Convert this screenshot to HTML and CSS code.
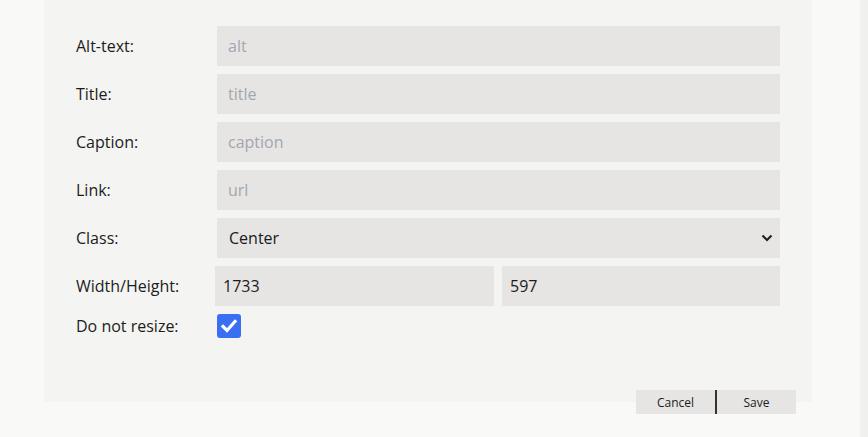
FILE: index.html
```html
<!DOCTYPE html>
<html>
<head>
<meta charset="utf-8">
<link rel="stylesheet" href="styles.css">
</head>
<body>
<div class="page">
  <div class="panel">
    <form class="form">
      <label class="lbl">Alt-text:</label>
      <input class="field" type="text" placeholder="alt">
      <label class="lbl">Title:</label>
      <input class="field" type="text" placeholder="title">
      <label class="lbl">Caption:</label>
      <input class="field" type="text" placeholder="caption">
      <label class="lbl">Link:</label>
      <input class="field" type="text" placeholder="url">
      <label class="lbl">Class:</label>
      <div class="select">
        <span>Center</span>
        <svg class="chev" width="12" height="8" viewBox="0 0 12 8"><path d="M1.5 1.5 L6 6 L10.5 1.5" fill="none" stroke="#222" stroke-width="2.2"/></svg>
      </div>
      <label class="lbl">Width/Height:</label>
      <div class="pair">
        <input class="field" type="text" value="1733">
        <input class="field" type="text" value="597">
      </div>
      <label class="lbl">Do not resize:</label>
      <div class="checkcell">
        <span class="check">
          <svg width="24" height="24" viewBox="0 0 24 24"><path d="M6 12.5 L10 16.5 L18 7.5" fill="none" stroke="#fff" stroke-width="3.2" stroke-linecap="square"/></svg>
        </span>
      </div>
    </form>
  </div>
  <div class="footer">
    <button class="btn" type="button">Cancel</button><span class="sep"></span><button class="btn" type="button">Save</button>
  </div>
</div>
</body>
</html>
```
FILE: styles.css
```css
html, body {
  margin: 0;
  padding: 0;
}
body {
  background: #f9f9f7;
  font-family: "Open Sans", "Noto Sans", sans-serif;
  color: #1a1a1a;
  height: 437px;
  overflow: hidden;
  border-right: 8px solid #f0f0ee;
  box-sizing: border-box;
}
.page {
  width: 768px;
  margin-left: 44px;
}
.panel {
  background: #f4f4f2;
  height: 402px;
  box-sizing: border-box;
  padding: 26px 32px 0 32px;
}
.form {
  display: grid;
  grid-template-columns: 141px 563px;
  grid-template-rows: repeat(6, 40px) 24px;
  row-gap: 8px;
  align-items: center;
}
.lbl {
  font-size: 16px;
  color: #1c1c1c;
}
.field {
  box-sizing: border-box;
  height: 40px;
  width: 100%;
  border: none;
  outline: none;
  background: #e6e5e3;
  font-family: "Open Sans", "Noto Sans", sans-serif;
  font-size: 16px;
  color: #1c1c1c;
  padding: 0 11px;
  margin: 0;
}
.field::placeholder {
  color: #a3a6b0;
}
.select {
  height: 40px;
  background: #e6e5e3;
  display: flex;
  align-items: center;
  justify-content: space-between;
  padding: 0 7px 0 12px;
  font-size: 16px;
}
.chev {
  display: block;
}
.pair {
  display: grid;
  grid-template-columns: 279px 278px;
  column-gap: 8px;
  margin-left: -2px;
}
.pair .field {
  padding: 0 8px;
}
.checkcell {
  display: flex;
  align-items: center;
  height: 24px;
}
.check {
  width: 24px;
  height: 24px;
  border-radius: 3px;
  background: #3a6ff4;
  display: block;
}
.check svg {
  display: block;
}
.footer {
  display: flex;
  justify-content: flex-end;
  margin-top: -12px;
  padding-right: 16px;
}
.btn {
  width: 79px;
  height: 24px;
  border: none;
  background: #e6e5e3;
  font-family: "Open Sans", "Noto Sans", sans-serif;
  font-size: 12px;
  color: #1c1c1c;
  padding: 0;
  margin: 0;
}
.sep {
  width: 2px;
  height: 24px;
  background: #333;
}
```
